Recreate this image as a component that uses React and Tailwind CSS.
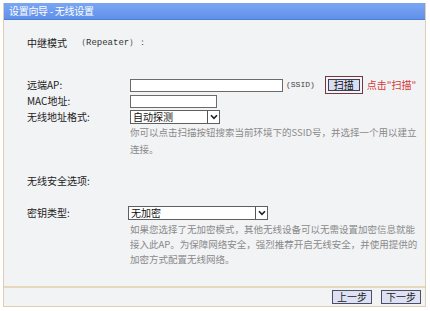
import React from 'react'

const Chevron = () => (
    <div className="w-[12px] h-full flex items-center justify-center border-l border-[#555] bg-white">
        <svg width="8" height="6" viewBox="0 0 8 6">
            <path d="M1 1.2 L4 4.4 L7 1.2" fill="none" stroke="#222" strokeWidth="1.6" />
        </svg>
    </div>
)

const Select = ({ value, width }) => (
    <div className={`${width} h-[14px] flex items-stretch border border-[#5f5f5f] bg-white`}>
        <div className="flex-1 flex items-center pl-[2px] text-[10px] leading-none text-[#111]">{value}</div>
        <Chevron />
    </div>
)

const Label = ({ children }) => (
    <div className="w-[103px] shrink-0 text-[10px] leading-none text-[#222]">{children}</div>
)

const StepButton = ({ children }) => (
    <button className="w-[40px] h-[14px] flex items-center justify-center border border-[#4a4f66] bg-[#dde1f3] text-[10px] leading-none text-[#222]">
        {children}
    </button>
)

const App = () => {
    return (
        <div className="w-[430px] h-[311px] bg-white pt-[3px] pl-[3px] font-['Noto_Sans_CJK_SC',sans-serif]">
            <div className="w-[423px] border-x border-b border-[#dfcfae] bg-[#f2f3f5]">
                {/* title bar */}
                <div className="h-[17px] flex items-center pl-[5px] bg-gradient-to-b from-[#7aa6f2] to-[#6190ea] border-b border-[#4f7ed8]">
                    <span className="text-[10px] leading-none text-white tracking-[-0.3px]">设置向导 - 无线设置</span>
                </div>

                <div className="pl-[23px]">
                    <div className="mt-[16px] flex items-center h-[14px]">
                        <span className="text-[10px] leading-none text-[#222]">中继模式</span>
                        <span className="ml-[10px] text-[9px] leading-none text-[#333] font-['Liberation_Mono',monospace]">（Repeater）：</span>
                    </div>

                    {/* remote AP */}
                    <div className="mt-[28px] flex items-center h-[14px]">
                        <Label>远端AP:</Label>
                        <div className="w-[153px] h-[13px] border border-[#6b6b6b] bg-white" />
                        <span className="ml-[3px] text-[8px] leading-none text-[#444] font-['Liberation_Mono',monospace]">(SSID)</span>
                        <div className="ml-[10px] p-[2px] border border-[#7a3640]">
                            <div className="w-[32px] h-[12px] flex items-center justify-center border border-[#3d4058] bg-[#d9ddf2] text-[10px] leading-none text-[#111]">扫描</div>
                        </div>
                        <span className="ml-[4px] text-[10px] leading-none text-[#d23a3a]">点击"扫描"</span>
                    </div>

                    <div className="mt-[2px] flex items-center h-[14px]">
                        <Label>MAC地址:</Label>
                        <div className="w-[87px] h-[13px] border border-[#6b6b6b] bg-white" />
                    </div>

                    <div className="mt-[2px] flex items-center h-[14px]">
                        <Label>无线地址格式:</Label>
                        <Select value="自动探测" width="w-[90px]" />
                    </div>

                    <div className="ml-[103px] mt-[0px] text-[9.5px] leading-[17px] text-[#8a8a8a]">
                        你可以点击扫描按钮搜索当前环境下的SSID号，并选择一个用以建立<br />
                        连接。
                    </div>

                    <div className="mt-[16px] h-[14px] flex items-center">
                        <Label>无线安全选项:</Label>
                    </div>

                    <div className="mt-[17px] flex items-center h-[15px]">
                        <Label>密钥类型:</Label>
                        <div className="-ml-[2px]">
                            <Select value="无加密" width="w-[140px]" />
                        </div>
                    </div>

                    <div className="ml-[103px] mt-[2px] text-[9.5px] leading-[15px] text-[#8a8a8a]">
                        如果您选择了无加密模式，其他无线设备可以无需设置加密信息就能<br />
                        接入此AP。为保障网络安全，强烈推荐开启无线安全，并使用提供的<br />
                        加密方式配置无线网络。
                    </div>
                </div>

                {/* footer */}
                <div className="mt-[19px] h-[20px] border-t-2 border-[#e6d8bb] flex items-center justify-end gap-[9px] pr-[4px]">
                    <StepButton>上一步</StepButton>
                    <StepButton>下一步</StepButton>
                </div>
            </div>
        </div>
    )
}

export default App
